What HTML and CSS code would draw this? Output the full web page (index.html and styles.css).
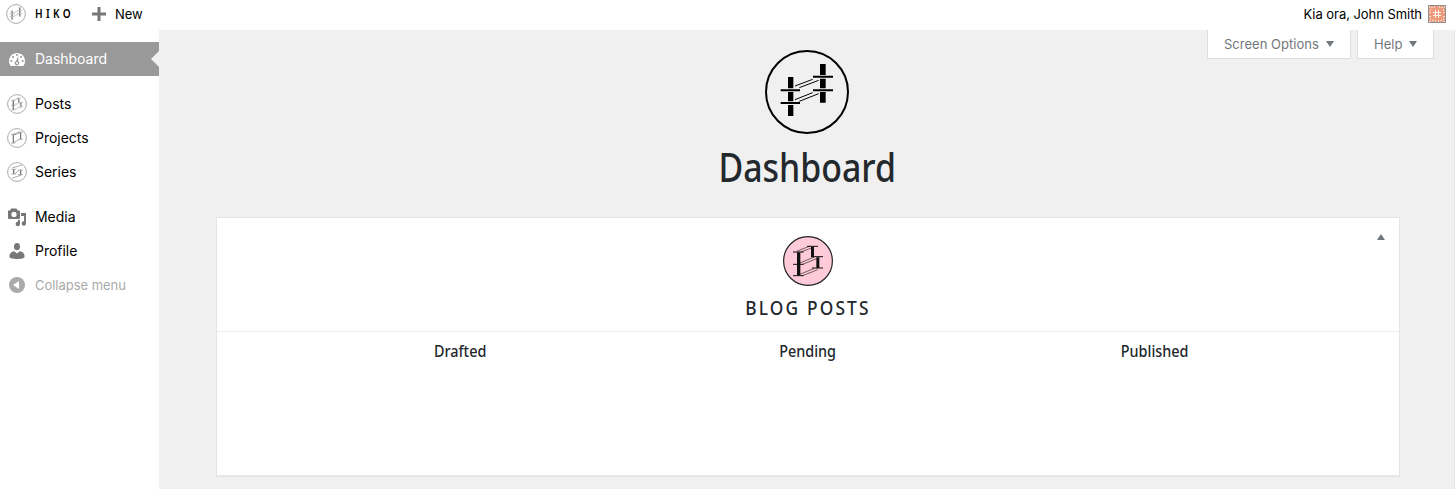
FILE: index.html
```
<!DOCTYPE html>
<html lang="en">
<head>
<meta charset="utf-8">
<title>Dashboard</title>
<link rel="stylesheet" href="styles.css">
</head>
<body>
<svg class="defs" width="0" height="0">
  <symbol id="hiko" viewBox="195 30 252 252">
    <path class="solid" d="M264 111h16v34h-16zM264 156h16v28h-16zM264 195h16v33h-16zM360 72h17v33h-17zM360 116h17v29h-17zM360 156h17v32h-17z"/>
    <path class="bar" d="M242 150.500h58M242 189h58M339 110.500h60M339 150.500h60"/>
    <path class="thin" d="M285 138l53-20M298 143l58-22M285 179l53-21M298 184l58-23"/>
  </symbol>
  <symbol id="posts" viewBox="159 33 150 150">
    <path class="solid" d="M201 82h10v69h-10zM243 65h9v32h-9zM259 97h9v32h-9z"/>
    <path class="bar" d="M189 81h32M189 118h32M189 152h32M231 64h33M247 95h32M246 129h33"/>
    <path class="thin" d="M200 79l40-16M213 81l31-12M205 116l48-20M218 118l42-17M205 150l48-20M218 152l45-18"/>
  </symbol>
</svg>
<header class="topbar">
  <svg class="logo mini" viewBox="0 0 20 20"><circle cx="10" cy="10" r="9.400"/><use href="#hiko" width="20" height="20"/></svg>
  <span class="brand"><span>HIKO</span></span>
  <svg class="plus" viewBox="0 0 14 14"><path d="M5.500 0h3v5.500H14v3H8.500V14h-3V8.500H0v-3h5.500z"/></svg>
  <span class="new">New</span>
  <span class="greeting">Kia ora, John Smith</span>
  <svg class="avatar" viewBox="0 0 18 18"><path fill="#ed9a7c" d="M0 0h18v18H0z"/><path fill="#f9d9ca" d="M1 1h1v2H1zM3 2h2v1H3zM6 1h1v2H6zM11 1h1v2h-1zM13 2h2v1h-2zM16 1h1v2h-1zM2 4h1v2H2zM15 4h1v2h-1zM1 7h2v1H1zM15 7h2v1h-2zM1 11h2v1H1zM15 11h2v1h-2zM2 13h1v2H2zM15 13h1v2h-1zM1 16h2v1H1zM4 15h2v1H4zM12 15h2v1h-2zM15 16h2v1h-2zM7 15h1v2H7zM10 15h1v2h-1z"/><path fill="none" stroke="#fff3ea" d="M5 7.500h8M5 10.500h8M7.500 5v8M10.500 5v8"/><path fill="none" stroke="#918d8b" d="M.5.5h17v17H.5z"/></svg>
</header>
<div class="layout">
  <nav class="menu">
    <a class="item current">
      <svg class="ico" viewBox="0 0 20 20"><path fill="#fff" d="M3.760 17h12.480C17.350 15.630 18 13.900 18 12c0-4.420-3.580-8-8-8s-8 3.580-8 8c0 1.900.660 3.630 1.760 5z"/><g fill="#999"><circle cx="10" cy="6" r="1"/><circle cx="6" cy="8" r="1"/><circle cx="4.300" cy="12" r="1"/><circle cx="14" cy="8" r="1"/><circle cx="15.700" cy="12" r="1"/><path d="M11.400 7l-.2 5.300a2.200 2.200 0 1 1-2.300-.1z"/></g><circle cx="10" cy="14" r="1" fill="#fff"/></svg>
      <span>Dashboard</span>
    </a>
    <a class="item gap">
      <svg class="ico mini" viewBox="0 0 20 20"><circle cx="10" cy="10" r="9.400"/><use href="#posts" width="20" height="20"/></svg>
      <span>Posts</span>
    </a>
    <a class="item">
      <svg class="ico mini" viewBox="0 0 20 20"><circle cx="10" cy="10" r="9.400"/><path class="solid" d="M5.700 6.800h1.200v8H5.700zM13 4.500h1.200v6.500H13z"/><path class="line" d="M4 6.600h4.500M4 15h4.500M11.500 4.200H16M11.500 11.200H16M5.500 6.300l7-2.300M7.500 6.700l5.500-1.700M6.500 14.500l6-3.300"/></svg>
      <span>Projects</span>
    </a>
    <a class="item">
      <svg class="ico mini" viewBox="0 0 20 20"><circle cx="10" cy="10" r="9.400"/><path class="solid" d="M6 7.500h1.400v4.300H6zM12.900 8.200h1.400v4.300h-1.400z"/><path class="line" d="M4.200 7.300h5M4.200 12h5M11 8h4.800M11 12.700h4.800M5 6l10-3M8.500 11.500l3.200-3.200M5 16.200l9-3"/></svg>
      <span>Series</span>
    </a>
    <a class="item gap">
      <svg class="ico" viewBox="0 0 20 20"><path fill="#777" fill-rule="evenodd" d="M1 3.500h2L4.200 1.500h5.300l1.200 2H12q1 0 1 1V11q0 1-1 1H2q-1 0-1-1zM7 4.800a2.600 2.600 0 1 0 0 5.200 2.600 2.600 0 0 0 0-5.200z"/><path fill="#777" d="M14 6h5v10.500a2.200 2.200 0 1 1-2-2.200V9h-3zM13 13v4a2.200 2.200 0 1 1-2-2.200V13z"/></svg>
      <span>Media</span>
    </a>
    <a class="item">
      <svg class="ico" viewBox="0 0 20 20"><path fill="#777" d="M10 9.200c-1.800 0-3-1.500-3-3.500C7 3.700 7.900 2 10 2s3 1.700 3 3.700c0 2-1.200 3.500-3 3.500zM7.300 10.200 10 12.500l2.700-2.300c2.900.200 4.800 2.100 4.800 4.900V16c0 1.300-3.600 2-7.500 2s-7.500-.700-7.500-2v-.9c0-2.800 1.900-4.700 4.800-4.900z"/></svg>
      <span>Profile</span>
    </a>
    <a class="item collapse">
      <svg class="ico" viewBox="0 0 20 20"><circle cx="10" cy="10" r="8" fill="#aaa"/><path fill="#fff" d="M12 6v8l-6-4z"/></svg>
      <span>Collapse menu</span>
    </a>
  </nav>
  <main class="content">
    <div class="tabs">
      <div class="tab options"><span>Screen Options</span><i class="down"></i></div>
      <div class="tab help"><span>Help</span><i class="down"></i></div>
    </div>
    <svg class="hero" viewBox="0 0 84 84"><circle cx="42" cy="42" r="41"/><use href="#hiko" width="84" height="84"/></svg>
    <h1><span>Dashboard</span></h1>
    <section class="panel">
      <div class="panel-head">
        <svg class="badge" viewBox="0 0 50 50"><circle cx="25" cy="25" r="24.400"/><use href="#posts" width="50" height="50"/></svg>
        <h2><span>BLOG POSTS</span></h2>
        <i class="up"></i>
      </div>
      <div class="cols"><h3><span>Drafted</span></h3><h3><span>Pending</span></h3><h3><span>Published</span></h3></div>
    </section>
  </main>
</div>
</body>
</html>
```
FILE: styles.css
```
* { box-sizing: border-box; }
body {
  margin: 0;
  height: 489px;
  overflow: hidden;
  background: #fff;
  color: #000;
  font: 14px/20px Inter, Roboto, sans-serif;
  letter-spacing: -0.03px;
}
.defs { position: absolute; }
svg { display: block; flex: none; }
.solid { fill: currentColor; }
.bar { stroke: currentColor; stroke-width: 6; }
.thin { stroke: currentColor; stroke-width: 3; }
#posts .bar { stroke-width: 3; }
#posts .thin { stroke-width: 1.8; }
.mini { color: #777; }
.mini circle { fill: none; stroke: #aaa; stroke-width: 1; }
.line { fill: none; stroke: currentColor; stroke-width: .6; }

.topbar { display: flex; align-items: center; height: 30px; padding: 0 9px 2px 6px; }
.logo { width: 20px; height: 20px; }
.brand { margin-left: 9px; width: 48px; font: 600 12px/20px "Noto Sans", sans-serif; letter-spacing: 4px; padding-bottom: 1px; }
.brand span { display: inline-block; transform: scaleX(.84); transform-origin: left; }
.plus { width: 14px; height: 14px; margin-left: 9px; fill: #777; }
.new { margin-left: 9px; font-size: 13px; letter-spacing: -.1px; }
.greeting { margin-left: auto; margin-right: 6px; font-size: 13px; letter-spacing: -.05px; }
.avatar { width: 18px; height: 18px; }

.layout { display: flex; height: 459px; }
.menu { width: 159px; padding-top: 12px; flex: none; }
.item { display: flex; align-items: center; height: 34px; padding-left: 7px; position: relative; }
.item span { margin-left: 8px; }
.gap { margin-top: 11px; }
.ico { width: 20px; height: 20px; }
.current { background: #999; color: #fff; }
.current::after {
  content: "";
  position: absolute;
  right: 0;
  top: 9px;
  border: 8px solid transparent;
  border-left: 0;
  border-right-color: #f0f0f0;
}
.collapse { color: #aaa; font-size: 13px; }

.content {
  flex: 1;
  display: flex;
  flex-direction: column;
  align-items: center;
  background: #f0f0f0;
  border-right: 1px solid #e5e5e5;
}
.tabs { align-self: flex-end; display: flex; gap: 6px; height: 20px; margin-right: 20px; }
.tab {
  display: flex;
  align-items: center;
  justify-content: space-between;
  height: 29px;
  padding: 0 16px;
  background: #fff;
  border: 1px solid #ddd;
  border-top: 0;
  color: #72777c;
  font-size: 13px;
  letter-spacing: .02px;
}
.options { width: 144px; }
.help { width: 77px; }
.down { border: 4.500px solid transparent; border-top: 6px solid #72777c; border-bottom: 0; }
.hero { width: 84px; height: 84px; color: #000; }
.hero circle { fill: none; stroke: #000; stroke-width: 2; }
h1, h2, h3 { margin: 0; color: #23282d; font-family: "Noto Sans", "Open Sans", sans-serif; }
h1 span, h2 span, h3 span { display: inline-block; }
h1 { height: 83px; padding-left: 2px; font-size: 39px; font-weight: 550; line-height: 66px; letter-spacing: 0; }
h1 span { transform: scaleX(.868); }
.panel { width: 1184px; height: 259px; margin-left: 2px; background: #fff; border: 1px solid #e5e5e5; box-shadow: 0 1px 1px rgba(0,0,0,.04); }
.panel-head {
  position: relative;
  display: flex;
  flex-direction: column;
  align-items: center;
  height: 114px;
  padding-top: 18px;
  border-bottom: 1px solid #eee;
}
.badge { width: 50px; height: 50px; color: #111; }
.badge circle { fill: #ffcad9; stroke: #222; stroke-width: 1.200; }
h2 { font-size: 19px; line-height: 24px; margin-top: 10px; font-weight: 550; letter-spacing: 2.400px; }
h2 span { transform: scaleX(.91); }
.up { position: absolute; right: 14px; top: 16px; border: 4px solid transparent; border-bottom: 6px solid #72777c; border-top: 0; }
.cols { display: grid; grid-template-columns: repeat(3, 347px); justify-content: center; padding-top: 8px; }
h3 { text-align: center; font-size: 16px; line-height: 22px; font-weight: 550; letter-spacing: 0; }
h3 span { transform: scaleX(.9); }
```
